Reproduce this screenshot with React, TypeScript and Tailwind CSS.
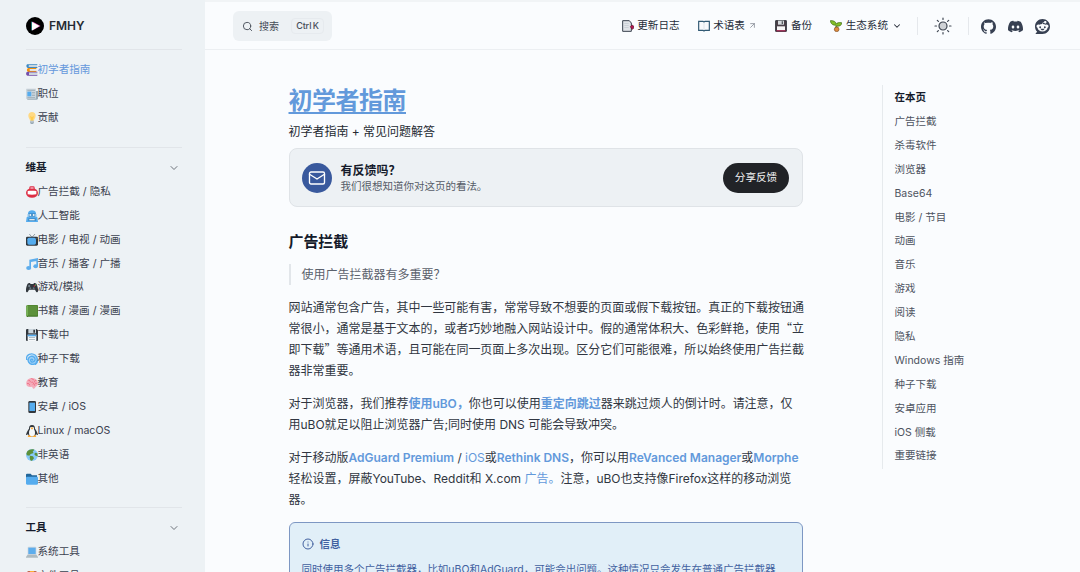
import type { ReactNode } from 'react';
import { ArrowUpRight, ChevronDown, Info, Mail, Search } from 'lucide-react';
import { SiDiscord, SiGithub, SiReddit } from 'react-icons/si';

const glyphs: Record<string, ReactNode> = {
  books: (
    <>
      <path fill="#3B88C3" d="M4 1h30v3H9v5h25v3H6C0 11 0 3 4 1z" />
      <path fill="#CCD6DD" d="M8 4h25v5H8z" />
      <path fill="#F4900C" d="M7 12h24v3H12v5h19v4H7C1 22 1 14 7 12z" />
      <path fill="#E1E8ED" d="M11 15h20v5H11z" />
      <path fill="#744EAA" d="M4 23h30v3H9v6h25v3H5C-1 34-1 25 4 23z" />
      <path fill="#CCD6DD" d="M9 26h25v6H9z" />
    </>
  ),
  news: (
    <>
      <path fill="#99AAB5" d="M27 9h9v23l-3 3H5l-3-3V3h25z" />
      <path fill="#CCD6DD" d="M1 2h29v30H1z" />
      <path fill="#9AAAB4" d="M4 5h23v3H4zM18 12h9v2h-9zM18 17h9v2h-9zM18 22h9v2h-9zM4 27h23v2H4z" />
      <path fill="#55ACEE" d="M4 11h12v14H4z" />
    </>
  ),
  bulb: (
    <>
      <path fill="#FFD983" d="M29 11c0 7-5 9-5 15H12c0-6-5-8-5-15C7 4 12 0 18 0s11 4 11 11z" />
      <path fill="#FFCC4D" d="M16 26 12 12l6 3 6-3-4 14z" />
      <path fill="#99AAB5" d="M12 26h12v6l-3 4h-6l-3-4z" />
      <path fill="#CCD6DD" d="M12 28h12v3H12z" />
    </>
  ),
  badge: (
    <>
      <rect x="10" y="1" width="16" height="12" rx="4" fill="#DD2E44" />
      <ellipse cx="18" cy="21" rx="18" ry="14.500" fill="#DD2E44" />
      <rect x="13" y="4" width="10" height="4" rx="1" fill="#F4ABBA" />
      <path fill="#FFF" d="M5 15c7-1 19-1 26 0v10c-7 2-19 2-26 0z" />
    </>
  ),
  robot: (
    <>
      <path fill="#55ACEE" d="M6 18V10C6-2 30-2 30 10v8l4 4 2 14H0l2-14z" />
      <path fill="#BDDDF4" d="M3 12h30v8H3z" />
      <path fill="#3B88C3" d="M8 10h20v10H8z" />
      <circle cx="13" cy="15" r="3" fill="#F5F8FA" />
      <circle cx="23" cy="15" r="3" fill="#F5F8FA" />
      <path fill="#3B88C3" d="M7 25h22v8H7z" />
      <path fill="#E1E8ED" d="M10 27h16v4H10z" />
    </>
  ),
  tv: (
    <>
      <path stroke="#66757F" strokeWidth="2" d="m10 0 8 10L27 0" fill="none" />
      <rect y="8" width="36" height="27" rx="4" fill="#31373D" />
      <rect x="4" y="11" width="26" height="21" rx="5" fill="#55ACEE" />
      <circle cx="33" cy="14" r="1" fill="#CCD6DD" />
    </>
  ),
  music: (
    <>
      <path fill="#5DADEC" d="M10 5 36 0v8L10 13zM10 5h5v25h-5zM31 2h5v23h-5z" />
      <ellipse cx="8" cy="30" rx="7.500" ry="6" fill="#5DADEC" />
      <ellipse cx="29" cy="25" rx="7" ry="6" fill="#5DADEC" />
    </>
  ),
  gamepad: (
    <>
      <path fill="#31373D" d="M5 8c4-4 8-2 9 1h8c1-3 5-5 9-1 3 4 6 17 5 23-1 5-6 3-9-5H9C6 34 1 36 0 31-1 25 2 12 5 8z" />
      <path stroke="#99AAB5" strokeWidth="2" d="M6 15h7M9.500 11.500v7" />
      <circle cx="25" cy="15" r="2" fill="#DD2E44" />
      <circle cx="29" cy="12" r="2" fill="#77B255" />
      <circle cx="13" cy="22" r="3" fill="#66757F" />
      <circle cx="23" cy="22" r="3" fill="#66757F" />
    </>
  ),
  book: (
    <>
      <rect x="1" y="0" width="35" height="36" rx="4" fill="#3E721D" />
      <path fill="#5C913B" d="M6 1h29v31H6z" />
      <path fill="#CCD6DD" d="M6 33h28v1H6z" />
      <path fill="#77B255" d="M1 5c0-2 2-4 5-4v31c-2 0-4 0-5 2z" />
    </>
  ),
  floppy: (
    <>
      <path fill="#31373D" d="M0 4c0-2 1-4 4-4h28l4 4v29c0 2-1 3-3 3H3c-2 0-3-1-3-3z" />
      <path fill="#CCD6DD" d="M7 0h23v13H7z" />
      <path fill="#31373D" d="M22 2h5v9h-5z" />
      <path fill="#F5F8FA" d="M5 17h26v19H5z" />
      <path fill="#55ACEE" d="M5 17h26v5H5z" />
      <path fill="#99AAB5" d="M9 25h18v2H9zM9 30h18v2H9z" />
    </>
  ),
  cyclone: (
    <>
      <circle cx="19" cy="20" r="14" fill="#9FD1F6" />
      <path
        fill="none"
        stroke="#55ACEE"
        strokeWidth="4"
        strokeLinecap="round"
        d="M2 19C-1 5 17-2 28 7c9 8 7 25-6 27-12 2-20-11-13-20 7-8 20-2 18 7-2 8-13 8-13 1 0-4 6-5 6-1M34 17c2 8 0 13-6 17"
      />
    </>
  ),
  brain: (
    <>
      <path fill="#F4ABBA" d="M1 22C-1 10 9 1 20 3c9 1 16 8 16 17-1 8-8 8-10 14-3 3-6 0-8-5C9 31 2 29 1 22z" />
      <path
        fill="none"
        stroke="#EA596E"
        strokeWidth="2"
        d="M7 10c4-1 7 2 5 6m4-12c1 3 7 2 8 6m7 0c-4-1-6 3-5 6M3 20c5-2 8 1 8 5m5-9c6-2 8 3 5 7m12-4c-6-2-8 2-7 7"
      />
    </>
  ),
  phone: (
    <>
      <rect x="7" width="23" height="36" rx="4" fill="#31373D" />
      <path fill="#55ACEE" d="M10 5h17v25H10z" />
    </>
  ),
  penguin: (
    <>
      <path fill="#31373D" d="M18 0c7 0 9 5 9 11 4 5 7 10 9 18-2 2-4 0-6-2-1 6-5 9-12 9S7 33 6 27c-2 2-4 4-6 2 2-8 5-13 9-18C9 5 11 0 18 0z" />
      <ellipse cx="18" cy="23" rx="9" ry="12" fill="#F5F8FA" />
      <path fill="#F5F8FA" d="M12 6h12v9H12z" />
      <path fill="#FFAC33" d="m14 9 4-2 4 2-4 5zM8 30l9 4-2 2H5zM28 30l-9 4 2 2h10z" />
      <circle cx="14" cy="7" r="1" fill="#31373D" />
      <circle cx="22" cy="7" r="1" fill="#31373D" />
    </>
  ),
  globe: (
    <>
      <circle cx="18" cy="18" r="18" fill="#88C9F9" />
      <path fill="#5C913B" d="M4 7C9 1 19-1 25 2l-5 6 3 4-9 3-4 5-7-1-2-5zM12 20l9 2 3 6-6 7c-7 0-5-6-7-9zM27 11l7 2 1 9-6-2-4-4z" />
    </>
  ),
  folder: (
    <>
      <path fill="#226699" d="M0 5c0-2 1-3 3-3h11l4 5h15v8H0z" />
      <path fill="#55ACEE" d="M0 31V14c0-2 2-3 4-3h28c3 0 4 1 4 4v16c0 3-1 4-4 4H4c-3 0-4-1-4-4z" />
    </>
  ),
  laptop: (
    <>
      <path fill="#CCD6DD" d="M5 5c0-2 1-3 3-3h20c2 0 3 1 3 3v23H5z" />
      <path fill="#5DADEC" d="M7 5h22v19H7z" />
      <path fill="#AEBBC1" d="M5 26h26l5 6v3H0v-3z" />
    </>
  ),
  clipboard: (
    <>
      <rect x="4" y="3" width="28" height="33" rx="3" fill="#C1694F" />
      <path fill="#F5F8FA" d="M8 8h20v24H8z" />
      <path fill="#FFAC33" d="M12 3h12v7H12z" />
      <path fill="#99AAB5" d="M11 14h14v2H11zM11 19h14v2H11z" />
    </>
  ),
  changelog: (
    <>
      <path fill="#E1E4E8" stroke="#39424E" strokeWidth="3" d="M2 2h20l6 7v25H2z" />
      <path fill="#C3CAD1" d="M7 10h13v2H7zM7 16h13v2H7zM7 22h13v2H7z" />
      <path fill="#B4164E" stroke="#5C1431" strokeWidth="2" d="m25 20 5-5 5 3v7l-5 3z" />
    </>
  ),
  openBook: (
    <>
      <path fill="#F8FAFC" stroke="#315A74" strokeWidth="3.500" d="M2 4h13l3 2 3-2h13v27H21l-3 2-3-2H2z" />
      <path stroke="#D2DCE2" strokeWidth="2" d="M18 8v22" />
    </>
  ),
  disk: (
    <>
      <path fill="#4A4048" stroke="#30333B" strokeWidth="3" d="M2 2h32v32H2z" />
      <path fill="#D6DADD" d="M9 2h18v12H9z" />
      <path fill="#555B60" d="M20 4h4v8h-4z" />
      <path fill="#F7F7F7" d="M6 19h24v12H6z" />
      <path fill="#B3184C" d="M4 31h28v3H4z" />
    </>
  ),
  sprout: (
    <>
      <path fill="#83BE27" stroke="#3E681A" strokeWidth="2" d="M18 15C10 17 2 12 1 2c9-1 17 3 18 10 2-4 8-5 16-4 0 7-5 12-14 10v7h-4z" />
      <circle cx="20" cy="28" r="7" fill="#DE8D40" stroke="#7B4920" strokeWidth="2" />
    </>
  ),
};

function Glyph({ name }: { name: string }) {
  return (
    <svg viewBox="0 0 36 36" className="size-3 shrink-0" fill="none" aria-hidden="true">
      {glyphs[name]}
    </svg>
  );
}

const introLinks = [
  { icon: 'books', label: '初学者指南', active: true },
  { icon: 'news', label: '职位' },
  { icon: 'bulb', label: '贡献' },
];

const wikiLinks = [
  { icon: 'badge', label: '广告拦截 / 隐私' },
  { icon: 'robot', label: '人工智能' },
  { icon: 'tv', label: '电影 / 电视 / 动画' },
  { icon: 'music', label: '音乐 / 播客 / 广播' },
  { icon: 'gamepad', label: '游戏/模拟' },
  { icon: 'book', label: '书籍 / 漫画 / 漫画' },
  { icon: 'floppy', label: '下载中' },
  { icon: 'cyclone', label: '种子下载' },
  { icon: 'brain', label: '教育' },
  { icon: 'phone', label: '安卓 / iOS' },
  { icon: 'penguin', label: 'Linux / macOS' },
  { icon: 'globe', label: '非英语' },
  { icon: 'folder', label: '其他' },
];

const toolLinks = [
  { icon: 'laptop', label: '系统工具' },
  { icon: 'clipboard', label: '文件工具' },
];

const outline = [
  '广告拦截', '杀毒软件', '浏览器', 'Base64', '电影 / 节目', '动画', '音乐', '游戏',
  '阅读', '隐私', 'Windows 指南', '种子下载', '安卓应用', 'iOS 侧载', '重要链接',
];

type NavItem = { icon: string; label: string; active?: boolean };

function NavList({ items }: { items: NavItem[] }) {
  return (
    <ul>
      {items.map((item) => (
        <li key={item.label}>
          <a
            className={
              item.active
                ? 'flex h-[23.9px] items-center whitespace-nowrap text-[#6598dc]'
                : 'flex h-[23.9px] items-center whitespace-nowrap text-[#3b414f]'
            }
          >
            <Glyph name={item.icon} />
            {item.label}
          </a>
        </li>
      ))}
    </ul>
  );
}

function GroupTitle({ children }: { children: ReactNode }) {
  return (
    <div className="flex h-[23.9px] items-center justify-between pr-0.5 font-bold text-[#151b2b]">
      {children}
      <ChevronDown size={12} strokeWidth={2} className="text-[#6d727b]" />
    </div>
  );
}

function Sidebar() {
  return (
    <aside className="h-full w-[205px] shrink-0 overflow-hidden bg-[#edf2f5] pr-[23px] pl-[25.5px] text-[10.6px]">
      <div className="flex h-[50px] items-center gap-[5.5px] border-b border-[#e1e5e9] pt-[2px]">
        <svg viewBox="0 0 36 36" className="size-[18px]">
          <circle cx="18" cy="18" r="18" fill="#000" />
          <path fill="#46d7df" d="m11 9 16 9-16 9z" />
          <path fill="#d84ba7" d="m13 9 16 9-16 9z" />
          <path fill="#fff" d="m12 10 15 8-15 9z" />
        </svg>
        <span className="text-[12px] font-semibold text-[#252a32]">FMHY</span>
      </div>
      <nav>
        <div className="h-[98px] border-b border-[#e1e5e9] pt-[8px]">
          <NavList items={introLinks} />
        </div>
        <div className="h-[360px] border-b border-[#e1e5e9] pt-[8px]">
          <GroupTitle>维基</GroupTitle>
          <NavList items={wikiLinks} />
        </div>
        <div className="pt-[8px]">
          <GroupTitle>工具</GroupTitle>
          <NavList items={toolLinks} />
        </div>
      </nav>
    </aside>
  );
}

function SunIcon() {
  return (
    <svg viewBox="0 0 18 18" className="size-[18px]" stroke="#3f4652" strokeLinecap="round" fill="none">
      <circle cx="9" cy="9" r="4" fill="#cfd2d6" strokeWidth="1.200" />
      <path strokeWidth="1.200" d="M9 1v1.500M9 15.500V17M1 9h1.500M15.500 9H17M3.300 3.300l1.100 1.100M13.600 13.600l1.100 1.100M3.300 14.700l1.100-1.100M13.600 4.400l1.100-1.100" />
    </svg>
  );
}

function Header() {
  return (
    <header className="flex h-[50px] shrink-0 items-center border-t-2 border-b border-t-[#f1f4f6] border-b-[#eceff2] pt-px pr-[30px] pl-7 text-[10.6px] text-[#262c39]">
      <button className="flex h-[30px] w-[99px] items-center rounded-md bg-[#edf1f4] pl-[9px] text-[#454b57]">
        <Search size={11} strokeWidth={2} />
        <span className="ml-[6px] text-[10px]">搜索</span>
        <kbd className="ml-[12px] flex h-4 w-[33px] items-center justify-center rounded-sm border border-[#e6eaee] text-[9px] font-medium tracking-[-0.1px] whitespace-nowrap text-[#484e59] [font-family:Inter,sans-serif]">
          Ctrl&thinsp;K
        </kbd>
      </button>
      <nav className="ml-auto flex items-center gap-[18px] whitespace-nowrap">
        <a className="flex items-center gap-[3.5px]">
          <Glyph name="changelog" />
          更新日志
        </a>
        <a className="flex items-center gap-[3.5px]">
          <Glyph name="openBook" />
          术语表
          <ArrowUpRight size={9} strokeWidth={2} className="text-[#7c828c]" />
        </a>
        <a className="flex items-center gap-[3.5px]">
          <Glyph name="disk" />
          备份
        </a>
        <button className="flex items-center gap-[3.5px]">
          <Glyph name="sprout" />
          生态系统
          <ChevronDown size={10} strokeWidth={2.500} />
        </button>
      </nav>
      <div className="ml-[15.5px] flex h-[18px] w-[52px] items-center justify-center border-x border-[#e5e8ec]">
        <SunIcon />
      </div>
      <div className="ml-3 flex items-center gap-3 text-[#374052]">
        <SiGithub size={15} />
        <SiDiscord size={15} />
        <SiReddit size={15} />
      </div>
    </header>
  );
}

function Strong({ children }: { children: ReactNode }) {
  return <a className="font-semibold text-[#6299db]">{children}</a>;
}

function Line({ children }: { children: ReactNode }) {
  return <span className="block whitespace-nowrap">{children}</span>;
}

// Curly quotes take a full em in Chinese text
function Quote({ children }: { children: ReactNode }) {
  return <span className="leading-none [font-family:'Noto_Sans_CJK_SC',sans-serif]">{children}</span>;
}

function Feedback() {
  return (
    <div className="mt-[6px] flex h-[59px] items-center rounded-lg border border-[#dfe3e7] bg-[#edf1f4] px-[12.5px]">
      <div className="flex size-[30px] items-center justify-center rounded-full bg-[#39599d] text-white">
        <Mail size={18} strokeWidth={1.800} />
      </div>
      <div className="ml-[8.5px]">
        <p className="text-[12px] leading-[17px] font-bold text-[#151b2b]">有反馈吗？</p>
        <p className="text-[10.5px] leading-[15px] text-[#565c68]">我们很想知道你对这页的看法。</p>
      </div>
      <button className="ml-auto h-[30px] w-[66px] rounded-full bg-[#212327] text-[10.6px] text-[#f4f5f6]">
        分享反馈
      </button>
    </div>
  );
}

function Article() {
  return (
    <article className="w-[514px] shrink-0 text-[12px] leading-[21px] tracking-[-0.01px] text-[#303641]">
      <h1 className="pt-px text-[24px] leading-[30px] font-bold tracking-[-0.5px] text-[#6299db] underline decoration-2 underline-offset-[3px]">
        初学者指南
      </h1>
      <p className="mt-[5px] text-[#252a32]">初学者指南 + 常见问题解答</p>
      <Feedback />
      <h2 className="mt-[23px] text-[15px] leading-6 font-bold tracking-[-0.1px] text-[#151b2b]">广告拦截</h2>
      <blockquote className="mt-[10px] border-l-2 border-[#e2e6ea] pl-[11px] text-[#5b616c]">
        使用广告拦截器有多重要？
      </blockquote>
      <p className="mt-3">
        <Line>网站通常包含广告，其中一些可能有害，常常导致不想要的页面或假下载按钮。真正的下载按钮通</Line>
        <Line>常很小，通常是基于文本的，或者巧妙地融入网站设计中。假的通常体积大、色彩鲜艳，使用<Quote>“</Quote>立</Line>
        <Line>即下载<Quote>”</Quote>等通用术语，且可能在同一页面上多次出现。区分它们可能很难，所以始终使用广告拦截</Line>
        <Line>器非常重要。</Line>
      </p>
      <p className="mt-3">
        <Line>
          对于浏览器，我们推荐<Strong>使用uBO，</Strong>你也可以使用<Strong>重定向跳过</Strong>器来跳过烦人的倒计时。请注意，仅
        </Line>
        <Line>用uBO就足以阻止浏览器广告;同时使用 DNS 可能会导致冲突。</Line>
      </p>
      <p className="mt-3">
        <Line>
          对于移动版<Strong>AdGuard Premium</Strong> / <a className="text-[#6299db]">iOS</a>或<Strong>Rethink DNS</Strong>，你可以用<Strong>ReVanced Manager</Strong>或<Strong>Morphe</Strong>
        </Line>
        <Line>
          轻松设置，屏蔽YouTube、Reddit和 X.com <a className="text-[#6299db]">广告。</a>注意，uBO也支持像Firefox这样的移动浏览
        </Line>
        <Line>器。</Line>
      </p>
      <div className="mt-3 rounded-md border border-[#7d97c3] bg-[#e1eff8] px-[12px] pt-[11px] pb-3 text-[10.5px] text-[#4261a0]">
        <p className="flex h-5 items-center gap-[6px] font-bold">
          <Info size={12} strokeWidth={2} />
          信息
        </p>
        <p className="mt-[7px] leading-[18px]">
          <Line>同时使用多个广告拦截器，比如uBO和AdGuard，可能会出问题。这种情况只会发生在普通广告拦截器</Line>
        </p>
      </div>
    </article>
  );
}

function Outline() {
  return (
    <aside className="ml-[79.5px] h-[384px] w-[160px] border-l border-[#e6eaed] pt-px pl-[11.5px] text-[10.5px] text-[#4d535f]">
      <p className="flex h-[23.9px] items-center font-bold text-[#151b2b]">在本页</p>
      <ul>
        {outline.map((label) => (
          <li key={label} className="flex h-[23.9px] items-center whitespace-nowrap">
            {label}
          </li>
        ))}
      </ul>
    </aside>
  );
}

export default function App() {
  return (
    <div className="flex h-[572px] w-[1080px] overflow-hidden bg-[#fafcfe] antialiased [font-family:Inter,'Noto_Sans_CJK_SC',sans-serif]">
      <Sidebar />
      <div className="flex min-w-0 flex-1 flex-col">
        <Header />
        <main className="flex min-h-0 flex-1 items-start overflow-hidden pt-[35px] pl-[83.5px]">
          <Article />
          <Outline />
        </main>
      </div>
    </div>
  );
}
